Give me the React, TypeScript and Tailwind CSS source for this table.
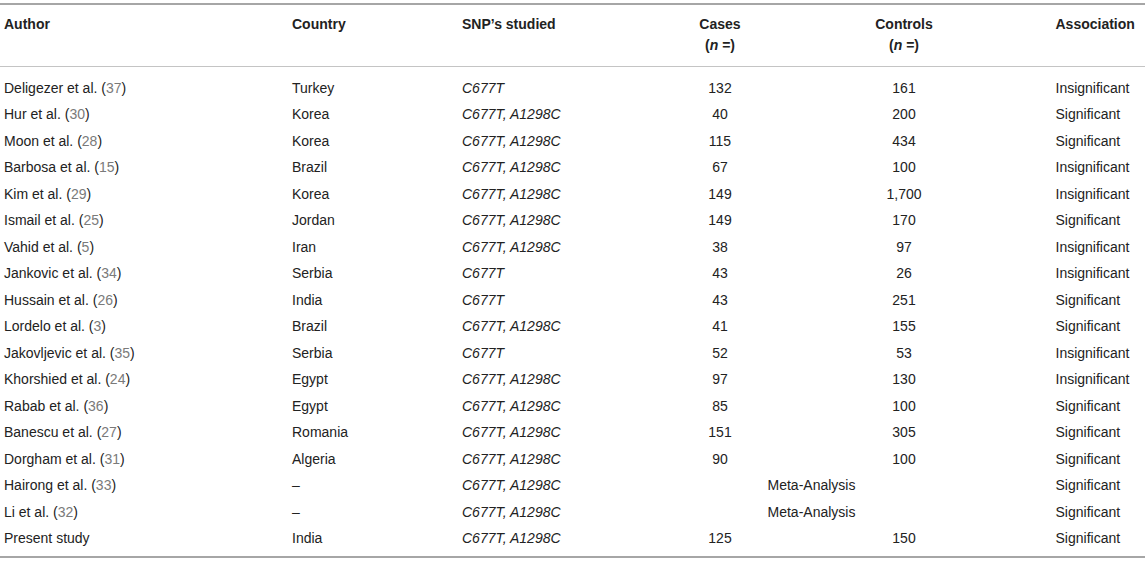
import React from "react";

type Row = {
  author: string;
  ref?: string;
  country: string;
  snp: string;
  cases?: string;
  controls?: string;
  meta?: boolean;
  association: string;
};

const rows: Row[] = [
  { author: "Deligezer et al.", ref: "37", country: "Turkey", snp: "C677T", cases: "132", controls: "161", association: "Insignificant" },
  { author: "Hur et al.", ref: "30", country: "Korea", snp: "C677T, A1298C", cases: "40", controls: "200", association: "Significant" },
  { author: "Moon et al.", ref: "28", country: "Korea", snp: "C677T, A1298C", cases: "115", controls: "434", association: "Significant" },
  { author: "Barbosa et al.", ref: "15", country: "Brazil", snp: "C677T, A1298C", cases: "67", controls: "100", association: "Insignificant" },
  { author: "Kim et al.", ref: "29", country: "Korea", snp: "C677T, A1298C", cases: "149", controls: "1,700", association: "Insignificant" },
  { author: "Ismail et al.", ref: "25", country: "Jordan", snp: "C677T, A1298C", cases: "149", controls: "170", association: "Significant" },
  { author: "Vahid et al.", ref: "5", country: "Iran", snp: "C677T, A1298C", cases: "38", controls: "97", association: "Insignificant" },
  { author: "Jankovic et al.", ref: "34", country: "Serbia", snp: "C677T", cases: "43", controls: "26", association: "Insignificant" },
  { author: "Hussain et al.", ref: "26", country: "India", snp: "C677T", cases: "43", controls: "251", association: "Significant" },
  { author: "Lordelo et al.", ref: "3", country: "Brazil", snp: "C677T, A1298C", cases: "41", controls: "155", association: "Significant" },
  { author: "Jakovljevic et al.", ref: "35", country: "Serbia", snp: "C677T", cases: "52", controls: "53", association: "Insignificant" },
  { author: "Khorshied et al.", ref: "24", country: "Egypt", snp: "C677T, A1298C", cases: "97", controls: "130", association: "Insignificant" },
  { author: "Rabab et al.", ref: "36", country: "Egypt", snp: "C677T, A1298C", cases: "85", controls: "100", association: "Significant" },
  { author: "Banescu et al.", ref: "27", country: "Romania", snp: "C677T, A1298C", cases: "151", controls: "305", association: "Significant" },
  { author: "Dorgham et al.", ref: "31", country: "Algeria", snp: "C677T, A1298C", cases: "90", controls: "100", association: "Significant" },
  { author: "Hairong et al.", ref: "33", country: "–", snp: "C677T, A1298C", meta: true, association: "Significant" },
  { author: "Li et al.", ref: "32", country: "–", snp: "C677T, A1298C", meta: true, association: "Significant" },
  { author: "Present study", country: "India", snp: "C677T, A1298C", cases: "125", controls: "150", association: "Significant" },
];

const cols = "grid grid-cols-[288px_170px_169.5px_185px_183px_1fr]";

export default function App() {
  return (
    <div className="w-[1145px] h-[563px] bg-white pt-[3px] font-['Liberation_Sans',Arial,sans-serif] text-[14px] text-[#222]">
      <div className="border-t-2 border-b-2 border-[#a6a6a6]">
        <div className={`${cols} border-b border-[#c4c4c4] pt-[8.5px] pb-[10.5px] font-bold leading-[21px]`}>
          <div className="pl-1">Author</div>
          <div className="pl-1">Country</div>
          <div className="pl-1">SNP’s studied</div>
          <div className="text-center">
            Cases
            <br />
            (<span className="italic">n</span> =)
          </div>
          <div className="text-center">
            Controls
            <br />
            (<span className="italic">n</span> =)
          </div>
          <div className="pl-[60px]">Association</div>
        </div>
        <div className="pt-[7.75px] pb-[4.25px]">
          {rows.map((r) => (
            <div key={r.author} className={`${cols} h-[26.5px] items-center`}>
              <div className="pl-1 whitespace-nowrap">
                {r.author}
                {r.ref && (
                  <>
                    {" "}(<span className="text-[#7a7a7a]">{r.ref}</span>)
                  </>
                )}
              </div>
              <div className="pl-1">{r.country}</div>
              <div className="pl-1 italic">{r.snp}</div>
              {r.meta ? (
                <div className="col-span-2 text-center">Meta-Analysis</div>
              ) : (
                <>
                  <div className="text-center">{r.cases}</div>
                  <div className="text-center">{r.controls}</div>
                </>
              )}
              <div className="pl-[60px]">{r.association}</div>
            </div>
          ))}
        </div>
      </div>
    </div>
  );
}
